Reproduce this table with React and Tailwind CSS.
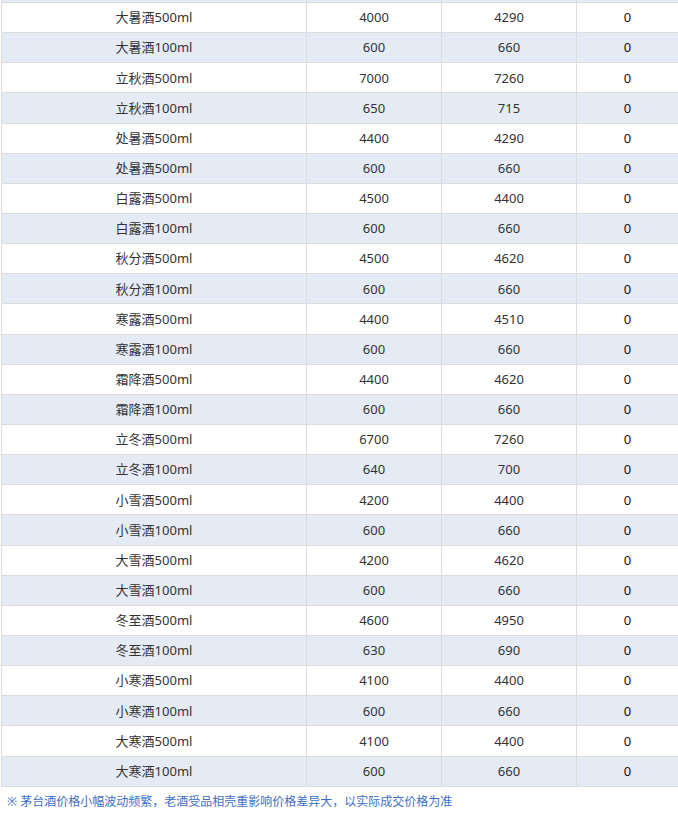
import React from "react";

const rows = [
  ["大暑酒500ml", "4000", "4290", "0"],
  ["大暑酒100ml", "600", "660", "0"],
  ["立秋酒500ml", "7000", "7260", "0"],
  ["立秋酒100ml", "650", "715", "0"],
  ["处暑酒500ml", "4400", "4290", "0"],
  ["处暑酒500ml", "600", "660", "0"],
  ["白露酒500ml", "4500", "4400", "0"],
  ["白露酒100ml", "600", "660", "0"],
  ["秋分酒500ml", "4500", "4620", "0"],
  ["秋分酒100ml", "600", "660", "0"],
  ["寒露酒500ml", "4400", "4510", "0"],
  ["寒露酒100ml", "600", "660", "0"],
  ["霜降酒500ml", "4400", "4620", "0"],
  ["霜降酒100ml", "600", "660", "0"],
  ["立冬酒500ml", "6700", "7260", "0"],
  ["立冬酒100ml", "640", "700", "0"],
  ["小雪酒500ml", "4200", "4400", "0"],
  ["小雪酒100ml", "600", "660", "0"],
  ["大雪酒500ml", "4200", "4620", "0"],
  ["大雪酒100ml", "600", "660", "0"],
  ["冬至酒500ml", "4600", "4950", "0"],
  ["冬至酒100ml", "630", "690", "0"],
  ["小寒酒500ml", "4100", "4400", "0"],
  ["小寒酒100ml", "600", "660", "0"],
  ["大寒酒500ml", "4100", "4400", "0"],
  ["大寒酒100ml", "600", "660", "0"],
];

export default function App() {
  return (
    <div
      className="w-[678px] h-[814px] overflow-hidden bg-white text-[13px]"
      style={{ fontFamily: '"Noto Sans", "Noto Sans CJK SC", sans-serif' }}
    >
      <div className="ml-px border-l border-[#dcdcdc]">
        <div className="grid grid-cols-[305px_135px_135px_1fr] h-[3px] bg-[#e5ebf5] border-b border-[#dcdcdc]">
          <div className="border-r border-[#dcdcdc]"></div>
          <div className="border-r border-[#dcdcdc]"></div>
          <div className="border-r border-[#dcdcdc]"></div>
          <div></div>
        </div>
        {rows.map((r, i) => (
          <div
            key={i}
            className={`grid grid-cols-[305px_135px_135px_1fr] h-[30.15px] border-b border-[#dcdcdc] ${
              i % 2 === 1 ? "bg-[#e5ebf5]" : "bg-white"
            }`}
          >
            <div className="flex items-center justify-center pt-px border-r border-[#dcdcdc] text-[#333]">
              {r[0]}
            </div>
            <div className="flex items-center justify-center pt-px border-r border-[#dcdcdc] text-[#333]">
              {r[1]}
            </div>
            <div className="flex items-center justify-center pt-px border-r border-[#dcdcdc] text-[#333]">
              {r[2]}
            </div>
            <div className="flex items-center justify-center pt-px text-[#111]">{r[3]}</div>
          </div>
        ))}
      </div>
      <div className="pl-[7px] pt-[7px] text-[12px] leading-[16px] text-[#3b6fc6]">
        ※ 茅台酒价格小幅波动频繁，老酒受品相壳重影响价格差异大，以实际成交价格为准
      </div>
    </div>
  );
}
